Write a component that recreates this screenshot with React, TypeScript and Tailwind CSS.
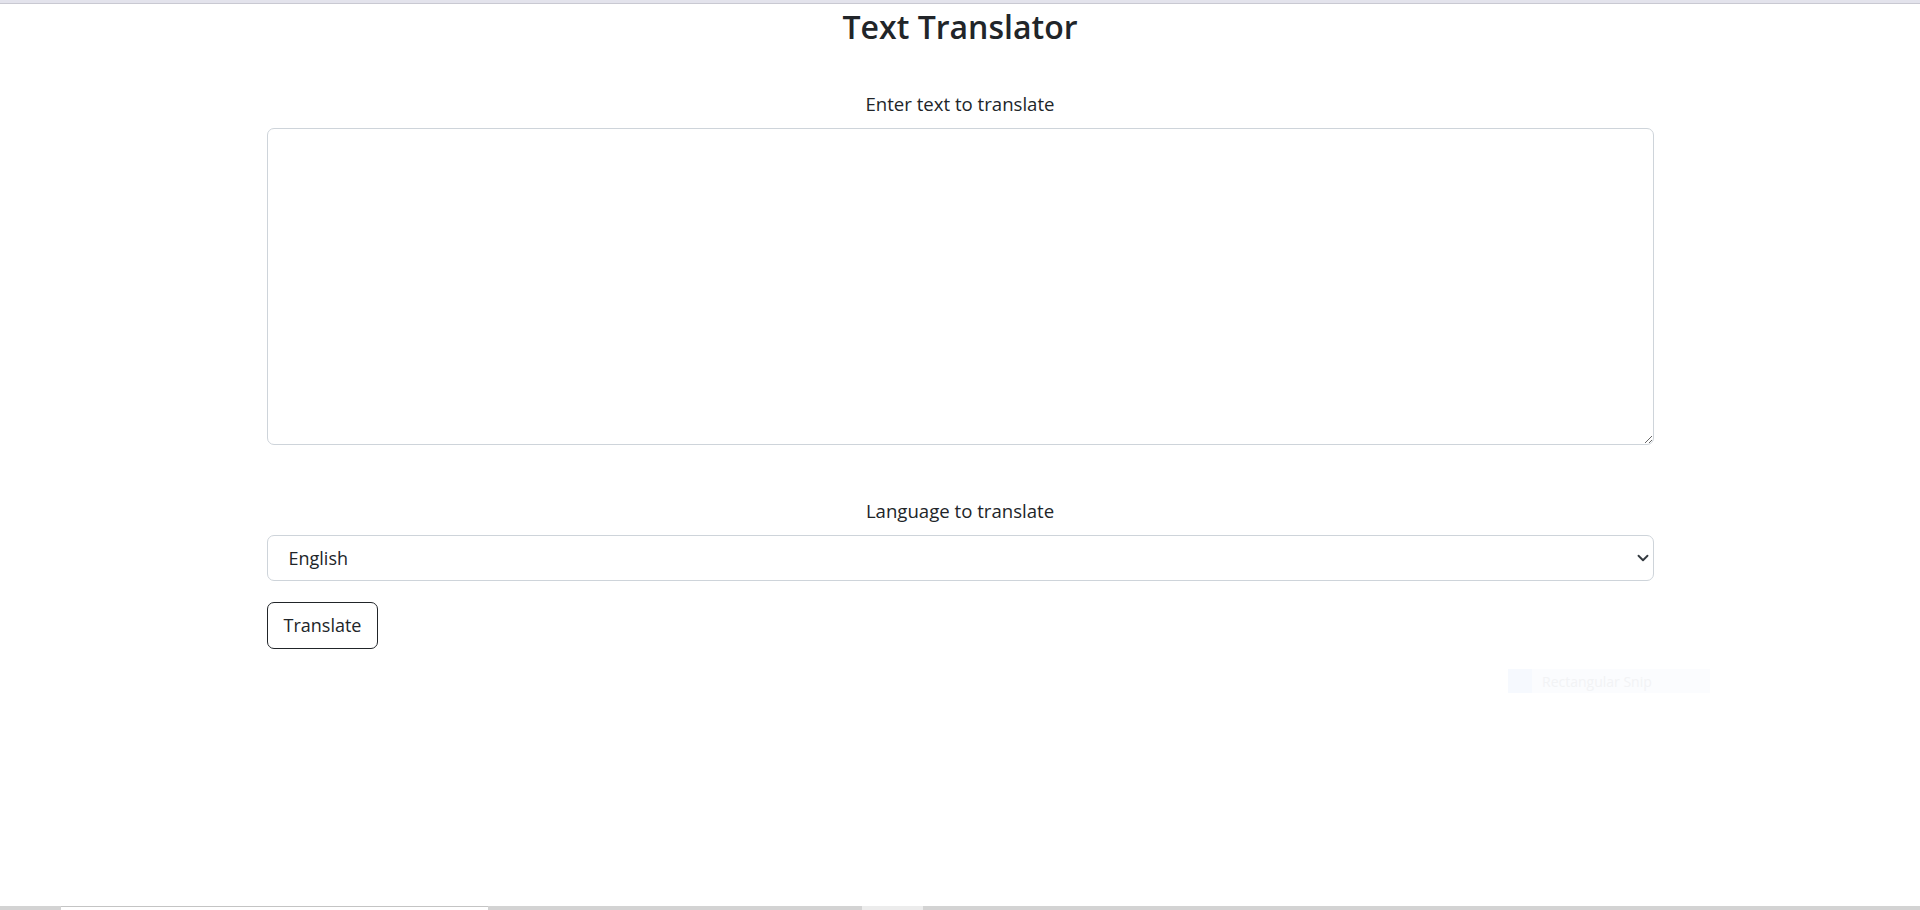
import { ChevronDown } from "lucide-react";

const font = { fontFamily: '"Open Sans", "Noto Sans", "Liberation Sans", sans-serif' };

export default function App() {
    return (
        <div className="relative h-[910px] w-full overflow-hidden bg-white text-[#212529]" style={font}>
            {/* top strip */}
            <div className="h-[4px] w-full bg-[#e3e3ec] border-b border-[#c9c9d2]" />

            <main className="mx-auto flex w-[1387px] flex-col">
                <h1 className="mt-[1px] text-center text-[32px] font-semibold leading-[44px]">Text Translator</h1>

                <label className="mt-[41px] text-center text-[18.6px] leading-[28px]">Enter text to translate</label>
                <textarea className="mt-[10px] h-[317px] w-full rounded-[7px] border border-[#ced4da] outline-none" />

                <label className="mt-[52px] text-center text-[18.6px] leading-[28px]">Language to translate</label>
                <div className="relative mt-[10px]">
                    <select className="h-[46px] w-full appearance-none rounded-[7px] border border-[#ced4da] bg-white pl-[21px] text-[18px] text-[#212529] outline-none">
                        <option>English</option>
                        <option>Spanish</option>
                        <option>French</option>
                        <option>German</option>
                    </select>
                    <ChevronDown className="pointer-events-none absolute right-[2px] top-[14px] h-[18px] w-[18px] text-[#343a40]" strokeWidth={2.5} />
                </div>

                <div className="mt-[21px]">
                    <button className="h-[47px] rounded-[7px] border border-[#212529] px-[16px] text-[18px]">Translate</button>
                </div>
            </main>

            {/* faint snip toolbar ghost */}
            <div className="absolute left-[1508px] top-[669px] flex h-[24px] w-[202px] items-center bg-[#fbfcfe]">
                <div className="h-full w-[24px] bg-[#f6f9fe]" />
                <span className="ml-[10px] text-[14px] text-[#f2f3f5]">Rectangular Snip</span>
            </div>

            {/* bottom scrollbar */}
            <div className="absolute bottom-0 left-0 flex h-[4px] w-full bg-[#d3d3d3]">
                <div className="ml-[61px] h-full w-[427px] bg-white border-t border-[#c4c4c4]" />
                <div className="ml-[374px] h-full w-[61px] bg-[#ececec]" />
            </div>
        </div>
    );
}
